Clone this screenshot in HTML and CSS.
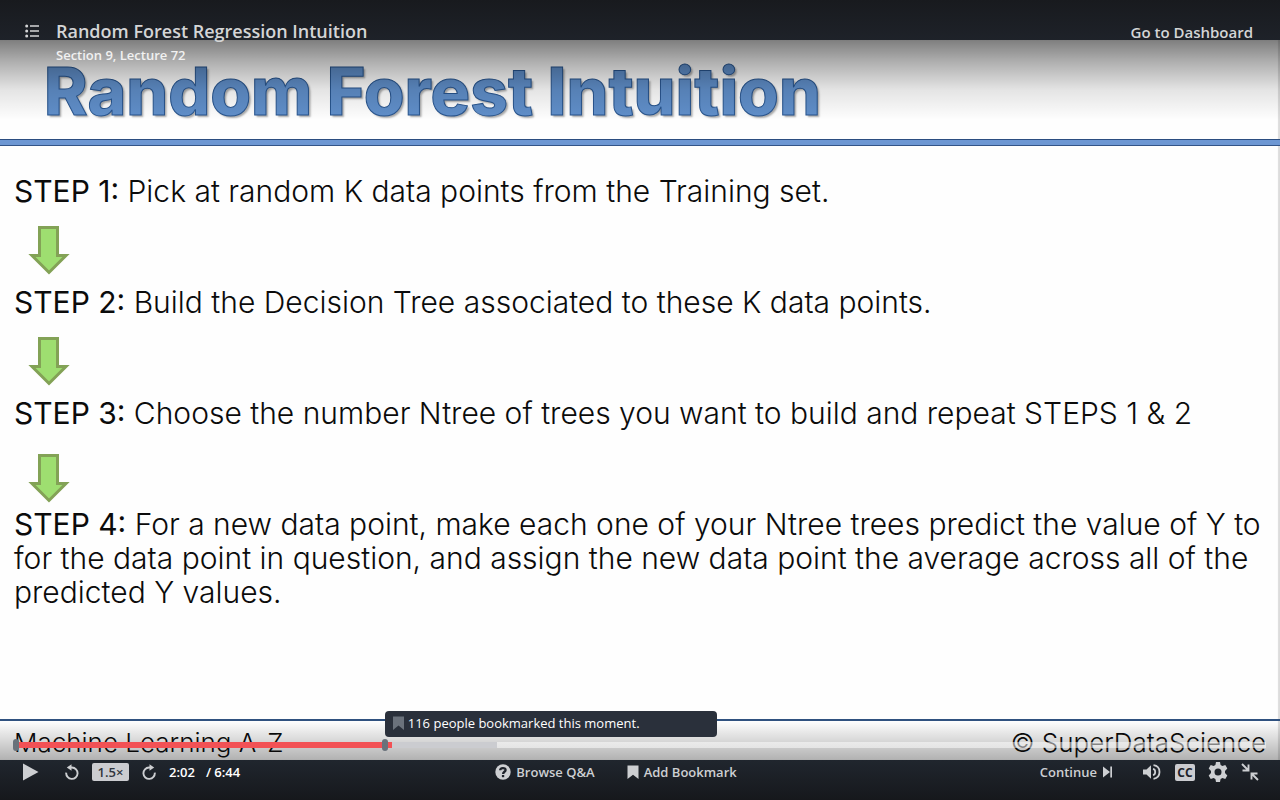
FILE: index.html
```html
<!DOCTYPE html>
<html lang="en">
<head>
<meta charset="utf-8">
<title>Random Forest Regression Intuition</title>
<link rel="stylesheet" href="styles.css">
</head>
<body>
<main class="player">
  <article class="slide">
    <h2 class="slide-title">Random Forest Intuition</h2>
    <div class="steps">
      <p class="step"><strong>STEP 1:</strong> Pick at random K data points from the Training set.</p>
      <svg class="arrow" viewBox="0 0 42 50" aria-hidden="true"><path d="M11.500 2.500h18v28h8.500L21 47.500 4 30.500h7.500z"/></svg>
      <p class="step"><strong>STEP 2:</strong> Build the Decision Tree associated to these K data points.</p>
      <svg class="arrow" viewBox="0 0 42 50" aria-hidden="true"><path d="M11.500 2.500h18v28h8.500L21 47.500 4 30.500h7.500z"/></svg>
      <p class="step"><strong>STEP 3:</strong> Choose the number Ntree of trees you want to build and repeat STEPS 1 &amp; 2</p>
      <svg class="arrow arrow-low" viewBox="0 0 42 50" aria-hidden="true"><path d="M11.500 2.500h18v28h8.500L21 47.500 4 30.500h7.500z"/></svg>
      <p class="step"><strong>STEP 4:</strong> For a new data point, make each one of your Ntree trees predict the value of Y to<br>for the data point in question, and assign the new data point the average across all of the<br>predicted Y values.</p>
    </div>
    <footer class="slide-footer"><span>Machine Learning A-Z</span><span>© SuperDataScience</span></footer>
  </article>

  <header class="topbar">
    <button class="icon-button" type="button" aria-label="Course content">
      <svg width="14" height="14" viewBox="0 0 14 14"><g fill="currentColor"><circle cx="1.700" cy="2" r="1.500"/><circle cx="1.700" cy="7" r="1.500"/><circle cx="1.700" cy="12" r="1.500"/><path d="M5 1.300h9v1.400H5zM5 6.300h9v1.400H5zM5 11.300h9v1.400H5z"/></g></svg>
    </button>
    <div class="lecture">
      <h1 class="lecture-title">Random Forest Regression Intuition</h1>
      <p class="lecture-number">Section 9, Lecture 72</p>
    </div>
    <a class="dashboard" href="#">Go to Dashboard</a>
  </header>

  <div class="bottom">
    <div class="timeline">
      <input class="seek" type="range" min="0" max="404" value="122" aria-label="Seek" style="--played:30.1%;--loaded:38.5%">
      <span class="mark" style="left:0%"></span>
      <span class="mark" style="left:29.5%"></span>
      <div class="tip" role="tooltip" style="left:29.5%">
        <svg width="11" height="14" viewBox="0 0 11 14" aria-hidden="true"><path fill="#6b727c" d="M0 .5h11V14L5.500 9.500 0 14z"/></svg>
        116 people bookmarked this moment.
      </div>
    </div>
    <div class="controls">
      <div class="group group-left">
        <button class="icon-button play" type="button" aria-label="Play"><svg width="17" height="18" viewBox="0 0 17 18"><path fill="currentColor" d="M1 .5 16.500 9 1 17.500z"/></svg></button>
        <button class="icon-button back" type="button" aria-label="Rewind"><svg width="14" height="16" viewBox="0 0 14 16"><path fill="none" stroke="currentColor" stroke-width="1.900" d="M1.200 8.700A5.700 5.700 0 1 0 7 3.500H5"/><path fill="currentColor" d="M6.500.2v6.600L1.800 3.500z"/></svg></button>
        <button class="rate" type="button">1.5×</button>
        <button class="icon-button forward" type="button" aria-label="Forward"><svg width="14" height="16" viewBox="0 0 14 16"><path fill="none" stroke="currentColor" stroke-width="1.900" d="M12.800 8.700A5.700 5.700 0 1 1 7 3.500H9"/><path fill="currentColor" d="M7.500.2v6.600l4.700-3.300z"/></svg></button>
        <span class="time"><span>2:02</span><span>/ 6:44</span></span>
      </div>
      <div class="group group-middle">
        <button class="text-button" type="button"><svg width="16" height="16" viewBox="0 0 16 16" aria-hidden="true"><circle cx="8" cy="8" r="7.700" fill="currentColor"/><path fill="none" stroke="#1d222a" stroke-width="2.300" d="M5.200 6.300C5.200 3.500 10.600 3.300 10.600 6c0 1.800-2.500 1.800-2.500 3.900"/><path fill="#1d222a" d="M6.900 11h2.300v2.200H6.900z"/></svg>Browse Q&amp;A</button>
        <button class="text-button" type="button"><svg width="12" height="14" viewBox="0 0 12 14" aria-hidden="true"><path fill="currentColor" d="M.5.500h11V14L6 9.700.5 14z"/></svg>Add Bookmark</button>
      </div>
      <div class="group group-right">
        <button class="text-button continue" type="button">Continue<svg width="11" height="12" viewBox="0 0 11 12" aria-hidden="true"><path fill="currentColor" d="M1 .5 8 6l-7 5.500zM8.300.5H10v11H8.300z"/></svg></button>
        <button class="icon-button" type="button" aria-label="Volume"><svg width="20" height="16" viewBox="0 0 20 16"><path fill="currentColor" d="M1 5.500h3.500L9 1.200v13.600l-4.500-4.300H1z"/><path fill="none" stroke="currentColor" stroke-width="1.800" d="M11 4.800q2.200.5 2.200 3.200T11 11.200M11.500 1.200Q17.500 2 17.500 8t-6 6.800"/></svg></button>
        <button class="captions" type="button" aria-label="Captions">CC</button>
        <button class="icon-button" type="button" aria-label="Settings"><svg width="20" height="20" viewBox="0 0 20 20"><path fill="currentColor" fill-rule="evenodd" d="M8 0h4l.6 3 1.800 1 2.900-1 2 3.400L17 8.900v2.200l2.300 2.500-2 3.400-2.900-1-1.800 1-.6 3H8l-.6-3-1.800-1-2.900 1-2-3.400L3 11.100V8.900L.7 6.400l2-3.400 2.900 1 1.800-1zM10 6.500a3.500 3.500 0 1 0 0 7 3.500 3.500 0 0 0 0-7z"/></svg></button>
        <button class="icon-button" type="button" aria-label="Exit full screen"><svg width="18" height="18" viewBox="0 0 18 18"><path fill="none" stroke="currentColor" stroke-width="1.900" d="M1 1l6 6M1.500 7.500h6v-6M17 17l-6-6M10.500 16.500v-6h6"/></svg></button>
      </div>
    </div>
  </div>
</main>
</body>
</html>
```
FILE: styles.css
```css
* { box-sizing: border-box; }
body { margin: 0; background: #16181c; font-family: "Open Sans", "Noto Sans", sans-serif; }
h1, h2, p { margin: 0; }
button { border: 0; padding: 0; background: none; color: inherit; font: inherit; cursor: pointer; }
svg { display: block; flex: none; }

.player {
  position: relative;
  display: flex;
  flex-direction: column;
  min-height: 100vh;
  padding: 40px 0;
  background: linear-gradient(#181a1e, #1e2229 40px, #1e2229);
  overflow: hidden;
}

.slide {
  flex: 1;
  display: flex;
  flex-direction: column;
  background: #fefefe;
  box-shadow: inset -2px 0 1px #dcdcdc;
  color: #0b0b0b;
  font-family: Inter, "Open Sans", sans-serif;
}
.slide-title {
  padding: 19px 44px 16px;
  border-bottom: 1px solid #2b4d80;
  box-shadow: 0 5px #6d97d3, 0 6px #335488;
  color: #608fca;
  font-size: 66px;
  font-weight: 800;
  line-height: 64px;
  -webkit-text-stroke: 1px #28558f;
  text-shadow: 2px 2px 2px #aaa;
}
.steps {
  flex: 1;
  display: flex;
  flex-direction: column;
  align-items: flex-start;
  padding: 34px 14px 0;
}
.step { font-size: 30px; font-weight: 300; line-height: 34px; }
.step strong { font-weight: 400; }
.arrow { width: 42px; height: 50px; margin: 17px 0 10px 14px; }
.arrow-low { margin: 23px 0 4px 14px; }
.arrow path { fill: #9ede70; stroke: #83a256; stroke-width: 3; }
.slide-footer {
  display: flex;
  justify-content: space-between;
  padding: 5px 14px 1px;
  border-top: 2px solid #2f517f;
  font-size: 26px;
  font-weight: 300;
  line-height: 33px;
}

.topbar {
  position: absolute;
  inset: 0 0 auto;
  display: flex;
  align-items: flex-start;
  height: 120px;
  padding: 18px 27px 0 25px;
  background: linear-gradient(transparent 40px, rgba(0, 0, 0, .5) 40px, rgba(0, 0, 0, .31) 62px, rgba(0, 0, 0, .1) 90px, transparent);
  color: #d4d5d6;
  font-weight: 600;
}
.topbar .icon-button { padding-top: 6px; }
.lecture { flex: 1; padding-left: 17px; }
.lecture-title { font-size: 18px; font-weight: 600; line-height: 26px; }
.lecture-number { color: #f1f1f1; font-size: 13px; line-height: 22px; }
.dashboard { color: inherit; font-size: 15px; line-height: 28px; text-decoration: none; }

.bottom {
  position: absolute;
  inset: auto 0 0;
  padding-top: 21px;
  background: linear-gradient(transparent, rgba(0, 0, 0, .3) 39px, #20262e 39px, #16181c);
  color: #cdcfd2;
  font-size: 13px;
  font-weight: 600;
}
.timeline { position: relative; height: 6px; margin: 0 14px 0 16px; }
.seek {
  appearance: none;
  display: block;
  width: 100%;
  height: 6px;
  margin: 0;
  background: linear-gradient(90deg, #f25155 var(--played), #cbccd0 var(--played), #cbccd0 var(--loaded), rgba(255, 255, 255, .5) var(--loaded));
}
.seek::-webkit-slider-thumb { appearance: none; width: 1px; height: 6px; }
.mark { position: absolute; top: -3px; width: 6px; height: 12px; margin-left: -3px; border-radius: 3px; background: #69727b; }
.tip {
  position: absolute;
  bottom: 11px;
  display: flex;
  align-items: center;
  gap: 4px;
  width: 332px;
  height: 26px;
  padding: 0 8px 2px;
  border-radius: 4px;
  background: #2a303b;
  color: #fff;
  font-weight: 400;
}
.controls {
  display: grid;
  grid-template-columns: 1fr auto 1fr;
  align-items: center;
  height: 52px;
  padding: 0 21px 4px 22px;
}
.group { display: flex; align-items: center; white-space: nowrap; }
.group-middle { gap: 32px; margin-right: 49px; }
.group-right { justify-content: flex-end; gap: 13px; }
.icon-button { display: flex; }
.text-button { display: flex; align-items: center; gap: 5px; }
.back { margin-left: 26px; }
.rate { width: 37px; height: 18px; margin: 0 13px; border-radius: 2px; background: #cbccd0; color: #30353d; line-height: 18px; }
.time { display: flex; gap: 11px; margin-left: 13px; color: #fff; }
.continue { margin-right: 16px; }
.captions { width: 20px; height: 17px; border-radius: 2px; background: #cbccd0; color: #1d222a; font-size: 12px; font-weight: 700; line-height: 17px; }
```
